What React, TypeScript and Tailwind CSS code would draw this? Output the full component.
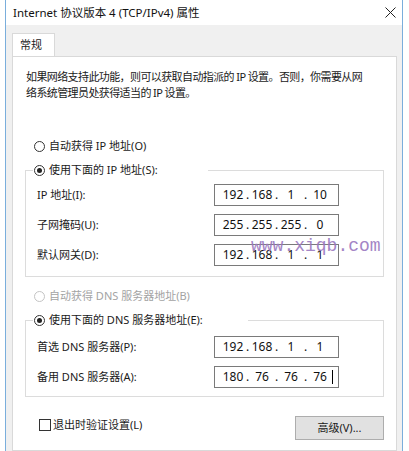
import React from "react";

const font = { fontFamily: '"Noto Sans", "Noto Sans CJK SC", sans-serif' };

function Radio({ checked, disabled }: { checked?: boolean; disabled?: boolean }) {
  return (
    <span
      className={
        "flex h-[11px] w-[11px] shrink-0 items-center justify-center rounded-full border bg-white " +
        (disabled ? "border-[#c4c4c4]" : "border-[#333333]")
      }
    >
      {checked ? <span className="h-[5px] w-[5px] rounded-full bg-[#222222]" /> : null}
    </span>
  );
}

function IpBox({ parts, cursor }: { parts: string[]; cursor?: boolean }) {
  return (
    <div className="flex h-[22px] w-[125px] shrink-0 items-center border border-[#7a7a7a] bg-white pl-[6px] text-[12px] text-[#111]">
      {parts.map((p, i) => (
        <React.Fragment key={i}>
          <span className="relative w-[24px] text-center leading-[16px]">
            {p}
            {cursor && i === 3 ? (
              <span className="absolute right-[-1px] top-[1px] h-[14px] w-[1px] bg-black" />
            ) : null}
          </span>
          {i < 3 ? <span className="w-[5px] text-center leading-[16px]">.</span> : null}
        </React.Fragment>
      ))}
    </div>
  );
}

function Row({ label, parts, cursor }: { label: string; parts: string[]; cursor?: boolean }) {
  return (
    <div className="flex h-[22px] items-center">
      <div className="w-[177px] shrink-0 text-[11px] leading-[16px]">{label}</div>
      <IpBox parts={parts} cursor={cursor} />
    </div>
  );
}

function GroupBox({
  legend,
  legendWidth,
  children,
  gapTop,
  padBottom,
}: {
  legend: string;
  legendWidth: string;
  children: React.ReactNode;
  gapTop: string;
  padBottom: string;
}) {
  return (
    <div className={"ml-[12px] mr-[12px] mt-[16px] border border-[#dcdcdc] " + padBottom}>
      <div
        className={
          "-mt-[9px] ml-[7px] flex h-[16px] items-center gap-[4px] bg-white pl-[1px] text-[11px] leading-[16px] " +
          legendWidth
        }
      >
        <Radio checked />
        <span>{legend}</span>
      </div>
      <div className={"ml-[11px] flex flex-col gap-[8px] " + gapTop}>{children}</div>
    </div>
  );
}

export default function App() {
  return (
    <div className="relative h-[451px] w-[409px] overflow-hidden bg-white text-[#1a1a1a]" style={font}>
      <div className="ml-[5px] flex h-[451px] w-[398px] flex-col border-l border-r border-[#7aaedc] bg-[#f0f0f0]">
        {/* title bar */}
        <div className="flex h-[25px] items-center justify-between bg-white pl-[7px] pr-[6px]">
          <span className="text-[11.5px] leading-[16px] text-[#111]">Internet 协议版本 4 (TCP/IPv4) 属性</span>
          <svg width="11" height="11" viewBox="0 0 11 11">
            <path d="M0.5 0.5 L10.5 10.5 M10.5 0.5 L0.5 10.5" stroke="#222" strokeWidth="1" />
          </svg>
        </div>
        {/* tabs */}
        <div className="ml-[6px] mr-[5px] mt-[8px] flex flex-1 flex-col">
          <div className="flex">
            <div className="flex h-[23px] w-[43px] items-center border border-b-0 border-[#d9d9d9] bg-white pl-[7px] text-[11px] leading-[16px]">
              常规
            </div>
          </div>
          <div className="flex-1 border border-[#d9d9d9] bg-white">
            <p className="ml-[13px] mt-[12px] whitespace-nowrap text-[11px] leading-[16px] tracking-[-0.6px]">
              如果网络支持此功能，则可以获取自动指派的 IP 设置。否则，你需要从网
              <br />
              络系统管理员处获得适当的 IP 设置。
            </p>

            <div className="ml-[21px] mt-[37px] flex h-[16px] items-center gap-[4px] text-[11px] leading-[16px]">
              <Radio />
              <span>自动获得 IP 地址(O)</span>
            </div>

            <GroupBox legend="使用下面的 IP 地址(S):" legendWidth="w-[175px]" gapTop="mt-[6px]" padBottom="pb-[10px]">
              <Row label="IP 地址(I):" parts={["192", "168", "1", "10"]} />
              <Row label="子网掩码(U):" parts={["255", "255", "255", "0"]} />
              <Row label="默认网关(D):" parts={["192", "168", "1", "1"]} />
            </GroupBox>

            <div className="ml-[21px] mt-[11px] flex h-[16px] items-center gap-[4px] text-[11px] leading-[16px] text-[#a3a3a3]">
              <Radio disabled />
              <span>自动获得 DNS 服务器地址(B)</span>
            </div>

            <GroupBox legend="使用下面的 DNS 服务器地址(E):" legendWidth="w-[215px]" gapTop="mt-[8px]" padBottom="pb-[8px]">
              <Row label="首选 DNS 服务器(P):" parts={["192", "168", "1", "1"]} />
              <Row label="备用 DNS 服务器(A):" parts={["180", "76", "76", "76"]} cursor />
            </GroupBox>

            <div className="ml-[26px] mr-[12px] mt-[19px] flex items-start justify-between">
              <div className="mt-[1px] flex h-[16px] items-center gap-[2px] text-[11px] leading-[16px]">
                <span className="h-[12px] w-[12px] border border-[#333] bg-white" />
                <span>退出时验证设置(L)</span>
              </div>
              <button className="flex h-[24px] w-[89px] items-center justify-center border border-[#adadad] bg-[#e1e1e1] text-[11px] leading-[16px] text-[#1a1a1a]">
                高级(V)...
              </button>
            </div>
          </div>
        </div>
      </div>
      <div
        className="pointer-events-none absolute left-[251px] top-[237px] text-[18px] leading-[18px] text-[#9a78c0] opacity-90"
        style={{ fontFamily: '"Liberation Mono", monospace' }}
      >
        www.xiqb.com
      </div>
    </div>
  );
}
